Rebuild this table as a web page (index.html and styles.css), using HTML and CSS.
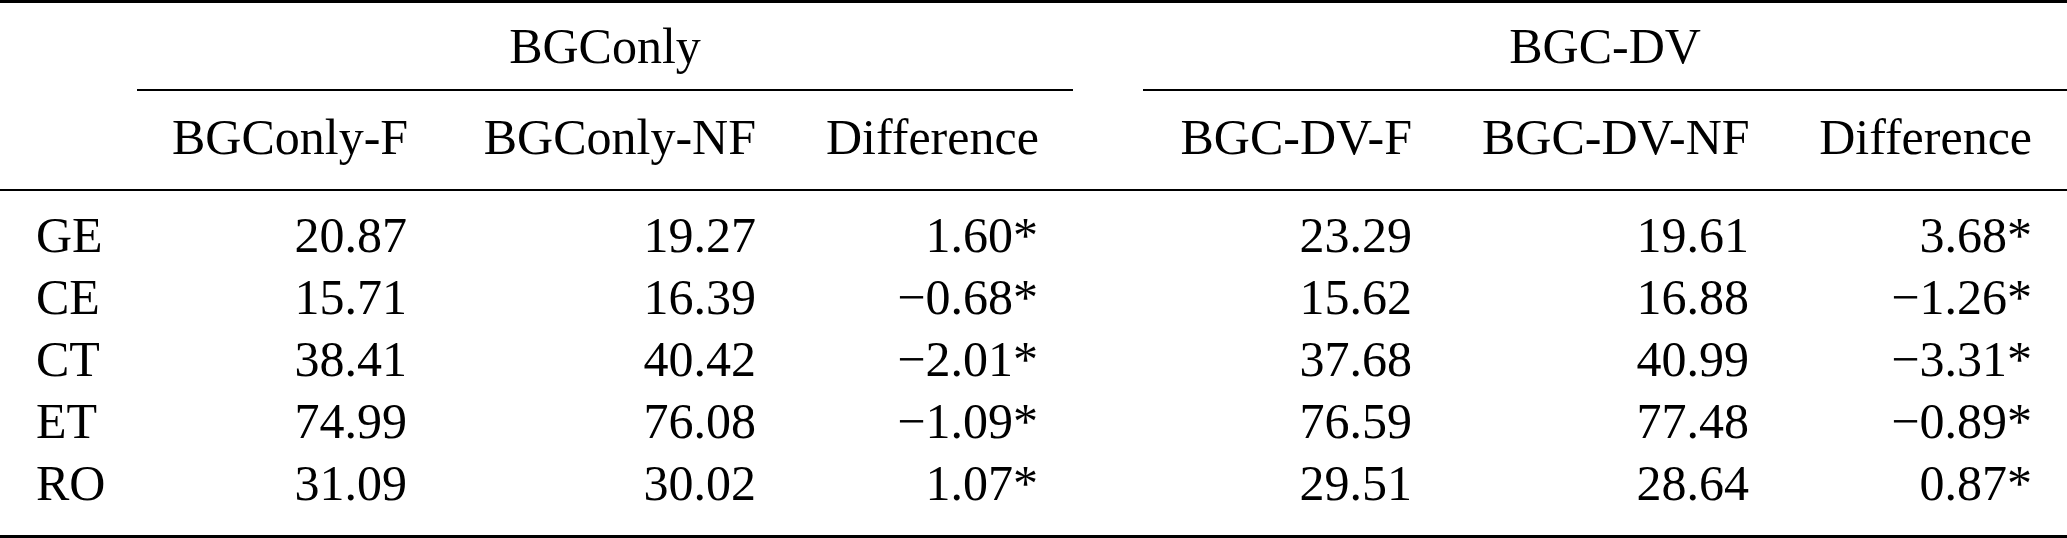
FILE: index.html
```html
<!DOCTYPE html>
<html lang="en">
<head>
    <meta charset="UTF-8">
    <title>BGConly vs BGC-DV</title>

    <link rel="stylesheet" href="styles.css">
</head>
<body>
<table class="results">
    <colgroup>
        <col class="c-stub">
        <col class="c-f">
        <col class="c-nf">
        <col class="c-diff">
        <col class="c-gap">
        <col class="c-f2">
        <col class="c-nf2">
        <col class="c-diff2">
    </colgroup>
    <thead>
        <tr class="group-row">
            <th></th>
            <th class="group" colspan="3">BGConly</th>
            <th></th>
            <th class="group" colspan="3">BGC-DV</th>
        </tr>
        <tr class="head-row">
            <th></th>
            <th>BGConly-F</th>
            <th>BGConly-NF</th>
            <th>Difference</th>
            <th></th>
            <th>BGC-DV-F</th>
            <th>BGC-DV-NF</th>
            <th>Difference</th>
        </tr>
    </thead>
    <tbody>
        <tr class="first">
            <td class="stub">GE</td>
            <td>20.87</td>
            <td>19.27</td>
            <td>1.60*</td>
            <td></td>
            <td>23.29</td>
            <td>19.61</td>
            <td>3.68*</td>
        </tr>
        <tr>
            <td class="stub">CE</td>
            <td>15.71</td>
            <td>16.39</td>
            <td>&minus;0.68*</td>
            <td></td>
            <td>15.62</td>
            <td>16.88</td>
            <td>&minus;1.26*</td>
        </tr>
        <tr>
            <td class="stub">CT</td>
            <td>38.41</td>
            <td>40.42</td>
            <td>&minus;2.01*</td>
            <td></td>
            <td>37.68</td>
            <td>40.99</td>
            <td>&minus;3.31*</td>
        </tr>
        <tr>
            <td class="stub">ET</td>
            <td>74.99</td>
            <td>76.08</td>
            <td>&minus;1.09*</td>
            <td></td>
            <td>76.59</td>
            <td>77.48</td>
            <td>&minus;0.89*</td>
        </tr>
        <tr class="last">
            <td class="stub">RO</td>
            <td>31.09</td>
            <td>30.02</td>
            <td>1.07*</td>
            <td></td>
            <td>29.51</td>
            <td>28.64</td>
            <td>0.87*</td>
        </tr>
    </tbody>
</table>
</body>
</html>
```

FILE: styles.css
```css
* {
    margin: 0;
    padding: 0;
    box-sizing: border-box;
}

body {
    background: #ffffff;
    color: #000000;
    font-family: "Liberation Serif", "Times New Roman", serif;
    font-size: 50px;
}

.results {
    width: 2067px;
    table-layout: fixed;
    border-collapse: separate;
    border-spacing: 0;
}

/* column widths follow the right edges of the numbers */
.c-stub { width: 137px; }
.c-f { width: 305px; }
.c-nf { width: 349px; }
.c-diff { width: 282px; }
.c-gap { width: 70px; }
.c-f2 { width: 304px; }
.c-nf2 { width: 337px; }
.c-diff2 { width: 283px; }

th, td {
    font-weight: normal;
    line-height: 62px;
    padding: 0 35px;
    text-align: right;
    vertical-align: top;
    white-space: nowrap;
}

.stub {
    text-align: left;
    padding-left: 36px;
}

/* top rule */
.group-row th {
    border-top: 3px solid #000;
    padding-top: 12px;
    padding-bottom: 12px;
}

/* cmidrule under each group */
.group-row th.group {
    text-align: center;
    border-bottom: 2px solid #000;
}

/* midrule */
.head-row th {
    padding-top: 15px;
    padding-bottom: 21px;
    border-bottom: 2px solid #000;
}

.first td {
    padding-top: 13px;
}

/* bottom rule */
.last td {
    padding-bottom: 21px;
    border-bottom: 3px solid #000;
}
```
